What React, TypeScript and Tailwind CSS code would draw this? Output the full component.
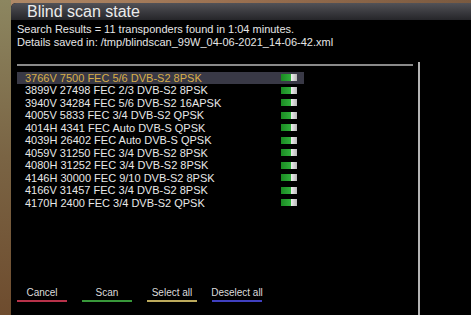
import React from "react";

const rows = [
  "3766V 7500 FEC 5/6 DVB-S2 8PSK",
  "3899V 27498 FEC 2/3 DVB-S2 8PSK",
  "3940V 34284 FEC 5/6 DVB-S2 16APSK",
  "4005V 5833 FEC 3/4 DVB-S2 QPSK",
  "4014H 4341 FEC Auto DVB-S QPSK",
  "4039H 26402 FEC Auto DVB-S QPSK",
  "4059V 31250 FEC 3/4 DVB-S2 8PSK",
  "4080H 31252 FEC 3/4 DVB-S2 8PSK",
  "4146H 30000 FEC 9/10 DVB-S2 8PSK",
  "4166V 31457 FEC 3/4 DVB-S2 8PSK",
  "4170H 2400 FEC 3/4 DVB-S2 QPSK",
];

function Toggle() {
  return (
    <div className="flex h-[7px] w-[16px]">
      <div className="h-full w-[10px] bg-gradient-to-r from-[#1a8a22] to-[#2fae3a]" />
      <div className="h-full w-[6px] bg-gradient-to-r from-[#f0f0f0] to-[#b8b8b8]" />
    </div>
  );
}

function Btn({ label, line }: { label: string; line: React.ReactNode }) {
  return (
    <div className="flex w-[50px] flex-col items-center">
      <div className="whitespace-nowrap text-[10px] leading-[12px] text-[#dcdcdc]">{label}</div>
      {line}
    </div>
  );
}

export default function App() {
  return (
    <div
      className="flex h-[315px] w-[471px] overflow-hidden bg-gradient-to-r from-[#b08a68] via-[#9a7050] to-[#7a5a40]"
      style={{ fontFamily: '"Liberation Sans", Arial, sans-serif' }}
    >
      <div className="h-full w-[11px] bg-gradient-to-b from-[#8c8660] via-[#7a6444] to-[#6e4c2e]" />
      <div className="mt-[3px] flex flex-1 flex-col overflow-hidden rounded-tl-[5px] bg-black">
        <div className="h-[17px] bg-gradient-to-b from-[#525257] to-[#26262a] pl-[16px] text-[16px] leading-[17px] text-[#ececec]">
          Blind scan state
        </div>
        <div className="flex flex-1 pl-[6px]">
          <div className="flex w-[396px] flex-col">
            <div className="pt-[3px] text-[11px] leading-[13px] text-[#e6e6e6]">
              <div>Search Results = 11 transponders found in 1:04 minutes.</div>
              <div>Details saved in: /tmp/blindscan_99W_04-06-2021_14-06-42.xml</div>
            </div>
            <div className="mt-[15px] h-[2px] w-full bg-[#8a8a8a]" />
            <div className="mt-[5.5px] flex w-[287px] flex-col">
              {rows.map((r, i) => (
                <div
                  key={r}
                  className={`flex h-[12.5px] items-center justify-between pl-[8px] pr-[7px] text-[11px] leading-[12.5px] ${
                    i === 0 ? "bg-[#393946] text-[#d8ae48]" : "text-[#e8e8e8]"
                  }`}
                >
                  <span>{r}</span>
                  <Toggle />
                </div>
              ))}
            </div>
            <div className="flex-1" />
            <div className="flex gap-[15px] pb-[13px]">
              <Btn label="Cancel" line={<div className="mt-[1px] h-[2px] w-[50px] bg-[#b8324a]" />} />
              <Btn label="Scan" line={<div className="mt-[1px] h-[2px] w-[50px] bg-[#38983a]" />} />
              <Btn label="Select all" line={<div className="mt-[1px] h-[2px] w-[50px] bg-[#bcaa5c]" />} />
              <Btn label="Deselect all" line={<div className="mt-[1px] h-[2px] w-[50px] bg-[#4040c0]" />} />
            </div>
          </div>
          <div className="ml-[5px] mt-[42px] w-[2px] bg-[#b4b4b4]" />
        </div>
      </div>
    </div>
  );
}
